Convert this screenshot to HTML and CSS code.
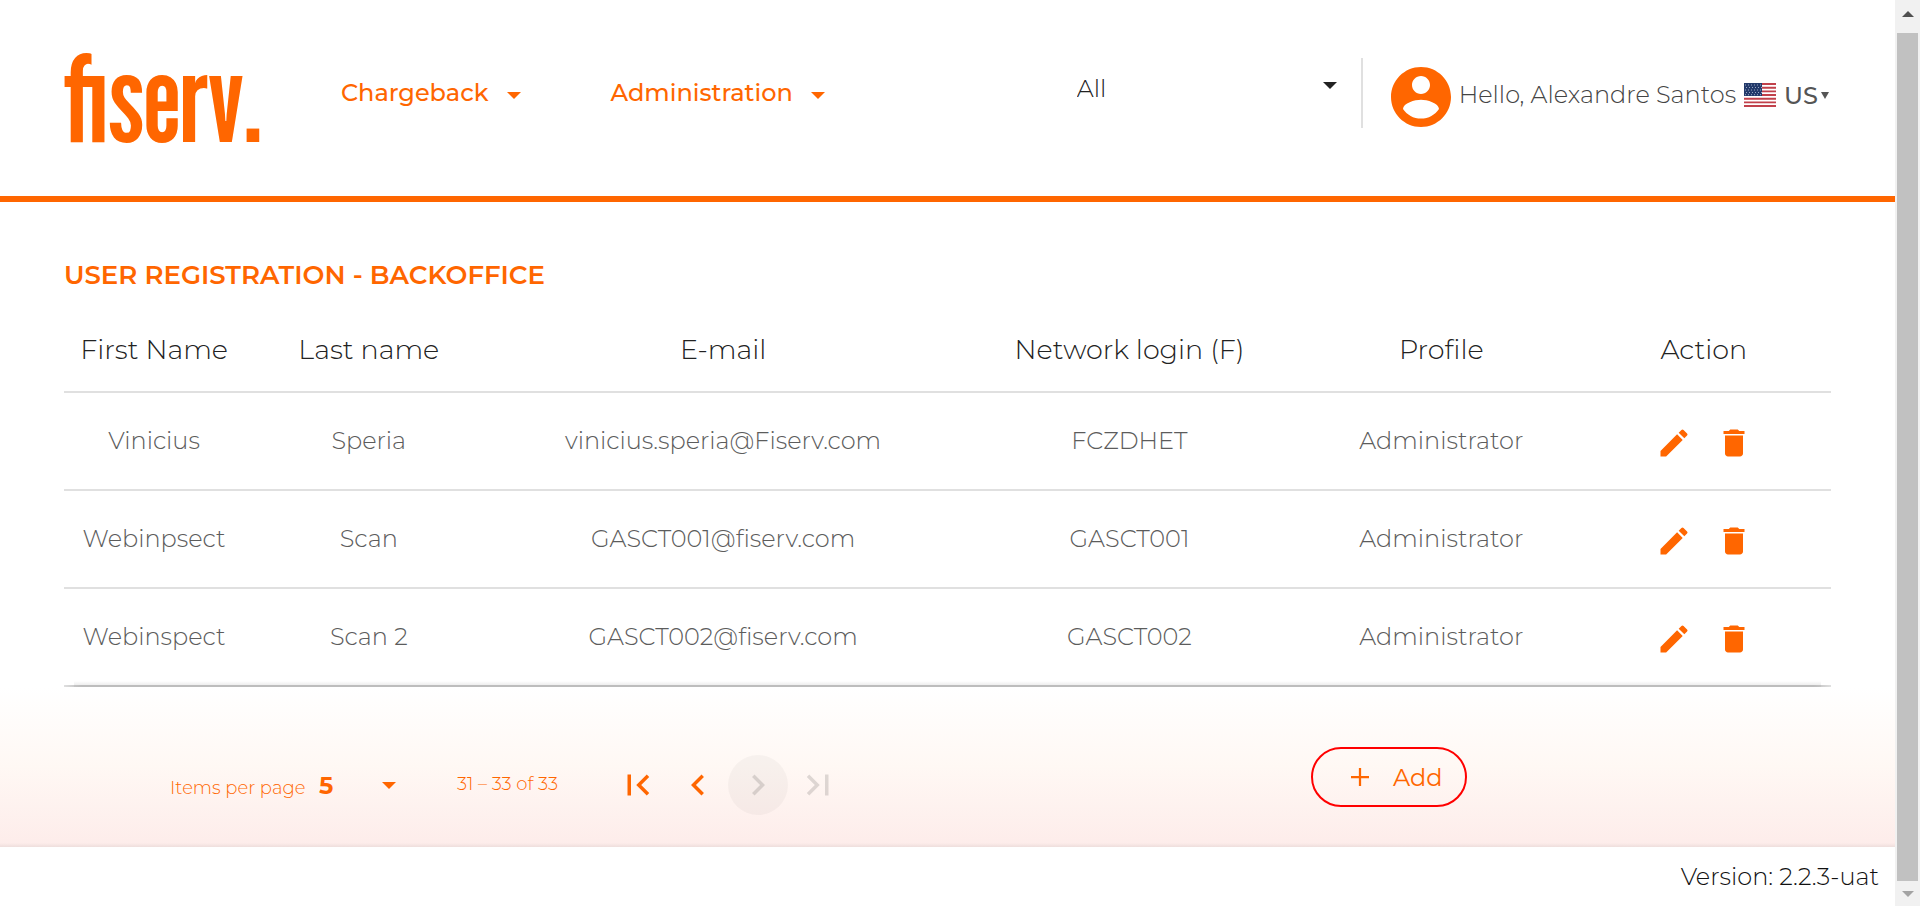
FILE: index.html
```html
<!DOCTYPE html>
<html lang="en">
<head>
<meta charset="utf-8">
<title>User registration - Backoffice</title>
<link rel="stylesheet" href="styles.css">
</head>
<body>
<svg class="sprite" aria-hidden="true">
  <symbol id="pencil" viewBox="0 0 24 24"><path d="M3 17.25V21h3.75L17.81 9.94l-3.75-3.75L3 17.25zM20.71 7.04a1 1 0 0 0 0-1.41l-2.34-2.34a1 1 0 0 0-1.41 0l-1.83 1.83 3.75 3.75 1.83-1.83z"/></symbol>
  <symbol id="bin" viewBox="0 0 24 24"><path d="M6 19c0 1.1.9 2 2 2h8c1.100 0 2-.9 2-2V7H6v12zM19 4h-3.500l-1-1h-5l-1 1H5v2h14V4z"/></symbol>
</svg>
<div class="app">
  <div class="page">
    <header class="topbar">
      <a class="logo" href="#">fiserv.</a>
      <nav class="menu">
        <button class="menu-item" type="button">Chargeback <span class="caret"></span></button>
        <button class="menu-item" type="button">Administration <span class="caret"></span></button>
      </nav>
      <div class="scope">
        <select class="scope-select" aria-label="Institution"><option>All</option></select>
        <span class="caret dark"></span>
      </div>
      <div class="account">
        <svg class="avatar" viewBox="2 2 20 20"><path d="M12 2C6.480 2 2 6.480 2 12s4.480 10 10 10 10-4.480 10-10S17.520 2 12 2zm0 3c1.660 0 3 1.340 3 3s-1.340 3-3 3-3-1.340-3-3 1.340-3 3-3zm0 14.200c-2.500 0-4.710-1.280-6-3.220.03-1.990 4-3.080 6-3.080 1.990 0 5.970 1.090 6 3.080-1.290 1.940-3.500 3.220-6 3.220z"/></svg>
        <span class="hello">Hello, Alexandre Santos</span>
        <button class="lang" type="button">
          <svg class="flag" viewBox="0 0 32 24">
            <rect width="32" height="24" fill="#fff"/>
            <path d="M0 1h32M0 4.700h32M0 8.400h32M0 12h32M0 15.700h32M0 19.400h32M0 23h32" stroke="#c1414b" stroke-width="1.900"/>
            <rect width="18" height="13" fill="#233a6b"/>
            <path d="M1 2h17M2 4.500h16M1 7h17M2 9.500h16M1 11.700h17" stroke="#9aa6c2" stroke-width="1" stroke-dasharray="1 2"/>
          </svg>
          US<span class="mini-caret"></span>
        </button>
      </div>
    </header>

    <main class="content">
      <h1 class="title">USER REGISTRATION - BACKOFFICE</h1>
      <table class="users">
        <colgroup><col class="c-first"><col class="c-last"><col class="c-mail"><col class="c-login"><col class="c-profile"><col class="c-action"></colgroup>
        <thead>
          <tr><th>First Name</th><th>Last name</th><th>E-mail</th><th>Network login (F)</th><th>Profile</th><th>Action</th></tr>
        </thead>
        <tbody>
          <tr><td>Vinicius</td><td>Speria</td><td>vinicius.speria@Fiserv.com</td><td>FCZDHET</td><td>Administrator</td>
            <td><div class="actions"><button type="button" aria-label="Edit"><svg><use href="#pencil"/></svg></button><button type="button" aria-label="Delete"><svg><use href="#bin"/></svg></button></div></td></tr>
          <tr><td>Webinpsect</td><td>Scan</td><td>GASCT001@fiserv.com</td><td>GASCT001</td><td>Administrator</td>
            <td><div class="actions"><button type="button" aria-label="Edit"><svg><use href="#pencil"/></svg></button><button type="button" aria-label="Delete"><svg><use href="#bin"/></svg></button></div></td></tr>
          <tr><td>Webinspect</td><td>Scan 2</td><td>GASCT002@fiserv.com</td><td>GASCT002</td><td>Administrator</td>
            <td><div class="actions"><button type="button" aria-label="Edit"><svg><use href="#pencil"/></svg></button><button type="button" aria-label="Delete"><svg><use href="#bin"/></svg></button></div></td></tr>
        </tbody>
      </table>
    </main>

    <section class="bottom">
      <div class="paginator">
        <label class="per-page" for="size">Items per page</label>
        <div class="size">
          <select class="size-select" id="size"><option>5</option></select>
          <span class="caret"></span>
        </div>
        <span class="range">31 – 33 of 33</span>
        <div class="pager">
          <button type="button" aria-label="First page"><svg viewBox="0 0 24 24"><path d="M18.410 16.590L13.820 12l4.590-4.590L17 6l-6 6 6 6zM6 6h2v12H6z"/></svg></button>
          <button type="button" aria-label="Previous page"><svg viewBox="0 0 24 24"><path d="M15.410 7.410L14 6l-6 6 6 6 1.410-1.410L10.830 12z"/></svg></button>
          <button class="focused" type="button" aria-label="Next page" disabled><svg viewBox="0 0 24 24"><path d="M10 6L8.590 7.410 13.170 12l-4.580 4.590L10 18l6-6z"/></svg></button>
          <button type="button" aria-label="Last page" disabled><svg viewBox="0 0 24 24"><path d="M5.590 7.410L10.180 12l-4.590 4.590L7 18l6-6-6-6zM16 6h2v12h-2z"/></svg></button>
        </div>
      </div>
      <button class="add" type="button"><svg viewBox="0 0 16 16"><path d="M8 0v16M0 8h16"/></svg>Add</button>
    </section>

    <footer class="version">Version: 2.2.3-uat</footer>
  </div>
  <div class="scrollbar" aria-hidden="true">
    <span class="arrow up"></span><span class="thumb"></span><span class="arrow down"></span>
  </div>
</div>
</body>
</html>
```

FILE: styles.css
```css
:root { --orange: #ff6600; }
* { box-sizing: border-box; }
body {
  margin: 0;
  font-family: Montserrat, Inter, "Open Sans", sans-serif;
  font-size: 24px;
  font-weight: 300;
  color: #222;
  background: #fff;
}
button, select {
  font: inherit;
  color: inherit;
  background: none;
  border: 0;
  padding: 0;
  margin: 0;
  appearance: none;
}
.sprite { display: none; }
.app { display: flex; min-height: 100vh; }
.page { flex: 1; display: flex; flex-direction: column; min-width: 0; }

.topbar {
  display: flex;
  align-items: flex-start;
  height: 202px;
  padding: 0 66px 0 64px;
  border-bottom: 6px solid var(--orange);
}
.logo {
  flex: none;
  width: 277px;
  padding-top: 38px;
  font-family: "League Gothic", Anton, Oswald, "Roboto Condensed", "DejaVu Sans Condensed", sans-serif;
  font-size: 120px;
  font-weight: 400;
  line-height: 120px;
  color: var(--orange);
  text-decoration: none;
}
.menu { display: flex; gap: 90px; padding-top: 77px; flex: 1; }
.menu-item {
  display: flex;
  align-items: center;
  gap: 18px;
  color: var(--orange);
  font-size: 24px;
  font-weight: 500;
  line-height: 32px;
}
.caret {
  flex: none;
  border: 7px solid transparent;
  border-top-color: var(--orange);
  border-bottom: 0;
}
.menu .caret { margin-top: 4px; }
.caret.dark { border-top-color: #222; margin-bottom: 6px; }
.scope {
  display: flex;
  align-items: center;
  width: 286px;
  height: 70px;
  margin-top: 58px;
  padding-bottom: 10px;
  padding-right: 24px;
  border-right: 2px solid #e0e0e0;
}
.scope-select { flex: 1; font-size: 24px; }
.account { display: flex; align-items: center; margin: 67px 0 0 28px; height: 60px; }
.avatar { width: 60px; height: 60px; fill: var(--orange); margin-right: 8px; }
.hello { font-weight: 300; white-space: nowrap; padding-bottom: 6px; color: #444; }
.lang {
  display: flex;
  align-items: center;
  margin-left: 8px;
  padding-bottom: 4px;
  font-weight: 500;
  color: #555;
}
.flag { width: 32px; height: 24px; margin-right: 8px; }
.mini-caret { border: 4px solid transparent; border-top: 7px solid #555; border-bottom: 0; margin-left: 3px; }

.content { padding: 0 64px; }
.title {
  margin: 56px 0 0;
  font-size: 26px;
  font-weight: 600;
  line-height: 34px;
  color: var(--orange);
}
.users {
  width: 100%;
  margin-top: 9px;
  table-layout: fixed;
  border-collapse: separate;
  border-spacing: 0;
  text-align: center;
  background: linear-gradient(90deg, transparent, #d8d8d8 1%, #d8d8d8 99%, transparent) bottom / 100% 2px no-repeat,
    linear-gradient(transparent, rgba(0, 0, 0, .1)) bottom / calc(100% - 20px) 6px no-repeat;
}
.c-first { width: 10.2%; }
.c-last { width: 14.1%; }
.c-mail { width: 26%; }
.c-login { width: 20%; }
.c-profile { width: 15.3%; }
.users th, .users td { border-bottom: 2px solid rgba(0, 0, 0, .12); white-space: nowrap; }
.users th { height: 92px; padding: 6px 0 0; font-size: 27px; font-weight: 300; }
.users td { height: 98px; padding: 0 0 2px; font-size: 24px; color: #5c5c5c; }
.actions { display: flex; justify-content: center; gap: 24px; padding-top: 6px; }
.actions button { width: 36px; height: 36px; }
.actions svg { width: 36px; height: 36px; fill: var(--orange); display: block; }

.bottom {
  display: flex;
  flex: 1;
  align-items: flex-start;
  color: var(--orange);
  background: linear-gradient(transparent, rgba(0, 0, 0, .06)) bottom / 100% 4px no-repeat,
    linear-gradient(#fff, #fff8f4 50%, #fdecea);
  padding: 60px 64px 0 170px;
}
.paginator { display: flex; align-items: center; width: 1141px; padding-top: 8px; }
.per-page { font-size: 18px; width: 149px; padding-top: 5px; white-space: nowrap; }
.size { display: flex; align-items: center; width: 138px; }
.size-select { width: 63px; font-size: 24px; font-weight: 700; }
.range { font-size: 18px; width: 151px; padding-bottom: 3px; white-space: nowrap; }
.pager { display: flex; }
.pager button { display: grid; place-items: center; width: 60px; height: 60px; border-radius: 50%; color: var(--orange); }
.pager svg { width: 42px; height: 42px; fill: currentColor; }
.pager button:disabled { color: rgba(0, 0, 0, .13); }
.pager .focused { background: rgba(0, 0, 0, .03); }
.add {
  display: flex;
  align-items: center;
  gap: 24px;
  height: 60px;
  padding: 0 22px 0 38px;
  border: 2px solid #ff0000;
  border-radius: 30px;
  font-size: 24px;
  font-weight: 400;
}
.add svg { width: 18px; height: 18px; stroke: currentColor; stroke-width: 2; }

.version { padding: 14px 16px 13px 0; text-align: right; font-size: 24px; line-height: 32px; color: #111; }

.scrollbar { display: flex; flex-direction: column; align-items: center; width: 25px; background: #f1f1f1; }
.arrow { height: 33px; padding-bottom: 6px; display: grid; place-items: center; }
.arrow::before { content: ""; border: 6px solid transparent; }
.up::before { border-bottom-color: #505050; border-top: 0; }
.down { height: 25px; padding: 0; }
.down::before { border-top-color: #a3a3a3; border-bottom: 0; }
.thumb { flex: 1; width: 21px; background: #c1c1c1; }
```
